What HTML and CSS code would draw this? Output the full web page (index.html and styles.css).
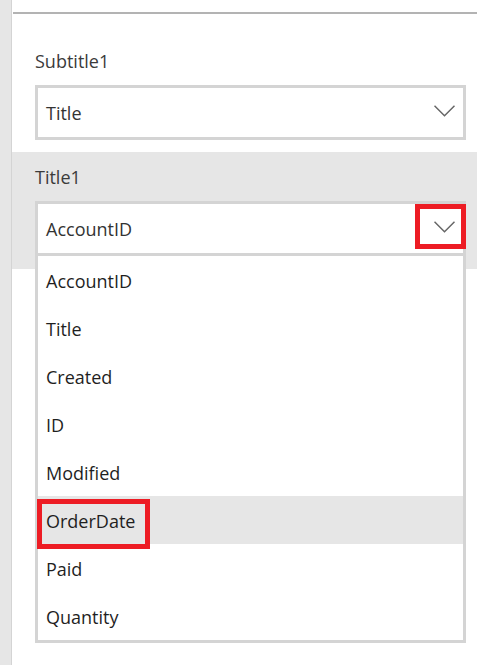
FILE: index.html
```html
<!DOCTYPE html>
<html>
<head>
<meta charset="utf-8">
<link rel="stylesheet" href="styles.css">
</head>
<body>
<div class="page">
  <div class="rail"></div>
  <div class="main">
    <div class="topline"></div>
    <section class="field field-plain">
      <div class="label">Subtitle1</div>
      <div class="select">
        <span class="value">Title</span>
        <svg class="chev" width="21" height="12" viewBox="0 0 21 12"><polyline points="0.5,0.8 10.5,10.8 20.5,0.8" fill="none" stroke="#666" stroke-width="1.5"/></svg>
      </div>
    </section>
    <section class="field field-active">
      <div class="label">Title1</div>
      <div class="select select-open">
        <span class="value">AccountID</span>
        <svg class="chev" width="21" height="12" viewBox="0 0 21 12"><polyline points="0.5,0.8 10.5,10.8 20.5,0.8" fill="none" stroke="#666" stroke-width="1.5"/></svg>
        <span class="callout callout-chev"></span>
        <ul class="menu">
          <li>AccountID</li>
          <li>Title</li>
          <li>Created</li>
          <li>ID</li>
          <li>Modified</li>
          <li class="hover">OrderDate<span class="callout callout-item"></span></li>
          <li>Paid</li>
          <li>Quantity</li>
        </ul>
      </div>
    </section>
  </div>
</div>
</body>
</html>
```

FILE: styles.css
```css
html, body {
  margin: 0;
  padding: 0;
  background: #fff;
}
body {
  width: 477px;
  height: 665px;
  overflow: hidden;
  font-family: "Open Sans", "Noto Sans", sans-serif;
}
.page {
  display: flex;
  height: 665px;
}
.rail {
  width: 11px;
  background: #e6e6e6;
  border-right: 1px solid #d4d4d4;
  flex: none;
}
.main {
  flex: 1;
  display: flex;
  flex-direction: column;
}
.topline {
  margin: 12px 0 0 1px;
  height: 2px;
  background: #b3b3b3;
}
.field {
  padding: 0 11px 0 23px;
}
.field-plain {
  padding-top: 35px;
  padding-bottom: 12px;
}
.field-active {
  background: #e6e6e6;
  padding-top: 13px;
  height: 117px;
  box-sizing: border-box;
}
.label {
  font-size: 18px;
  line-height: 24px;
  color: #3b3b3b;
  margin-bottom: 12px;
}
.select {
  position: relative;
  height: 55px;
  box-sizing: border-box;
  border: 3px solid #d4d4d4;
  background: #fff;
  display: flex;
  align-items: center;
  justify-content: space-between;
  padding: 0 8px 0 8px;
}
.value {
  font-size: 18px;
  color: #333;
}
.chev {
  display: block;
  margin-top: -3px;
}
.callout {
  position: absolute;
  border: 5px solid #ed1c24;
  box-sizing: border-box;
}
.callout-chev {
  right: -3px;
  top: 0;
  width: 51px;
  height: 45px;
}
.menu {
  position: absolute;
  left: -3px;
  right: -3px;
  top: 49px;
  margin: 0;
  padding: 0;
  list-style: none;
  border: 3px solid #d4d4d4;
  background: #fff;
  z-index: 2;
}
.menu li {
  position: relative;
  height: 48px;
  box-sizing: border-box;
  padding-top: 3px;
  line-height: 45px;
  padding-left: 8px;
  font-size: 18px;
  color: #1f1f1f;
}
.menu li.hover {
  background: #e6e6e6;
}
.callout-item {
  left: -1px;
  top: 3px;
  width: 113px;
  height: 50px;
}
```
